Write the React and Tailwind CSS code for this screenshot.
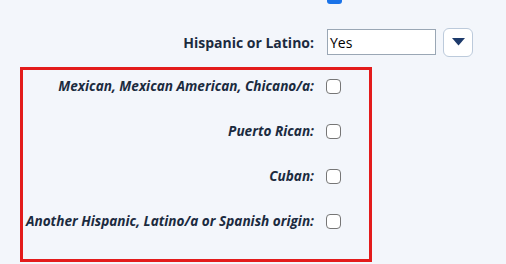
export default function App() {
  const rows = [
    "Mexican, Mexican American, Chicano/a:",
    "Puerto Rican:",
    "Cuban:",
    "Another Hispanic, Latino/a or Spanish origin:",
  ];

  return (
    <div className="w-[506px] h-[264px] overflow-hidden bg-[#f3f6fb] font-['Open_Sans',sans-serif] text-[#1b2b3f]">
      {/* checked box cut off at the top */}
      <div className="h-[4px] overflow-hidden pl-[327px]">
        <div className="-mt-[10px] h-[14px] w-[15px] rounded-[3px] bg-[#1a73e8]" />
      </div>

      <div className="flex items-center h-[30px] mt-[23px]">
        <div className="w-[315px] text-right font-bold text-[14px] pr-[1px]">Hispanic or Latino:</div>
        <div className="ml-[12px] w-[109px] h-[26px] border border-[#9aa7b5] bg-white flex items-center pl-[2px] text-[14px] text-black">
          Yes
        </div>
        <button className="ml-[7px] w-[30px] h-[29px] rounded-[6px] border border-[#bccadb] bg-white flex items-center justify-center">
          <svg width="13" height="8" viewBox="0 0 13 8">
            <path d="M0 0 H13 L6.5 7.5 Z" fill="#1d3a6b" />
          </svg>
        </button>
      </div>

      <div className="ml-[20px] mt-[10px] w-[352px] h-[195px] border-[3px] border-[#e31b1b] pt-[4px] flex flex-col gap-[20px]">
        {rows.map((r) => (
          <div key={r} className="h-[25px] flex items-center justify-end pr-[28px]">
            <span className="font-bold italic text-[13.6px] whitespace-nowrap">{r}</span>
            <span className="ml-[12px] w-[15px] h-[15px] rounded-[4px] border border-[#767676] bg-white" />
          </div>
        ))}
      </div>
    </div>
  );
}
